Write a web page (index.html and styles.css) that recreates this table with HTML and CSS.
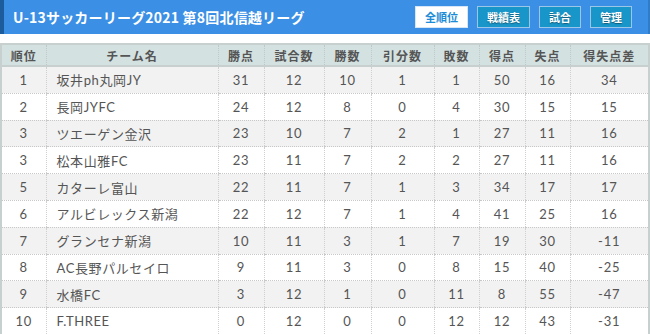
FILE: index.html
```html
<!DOCTYPE html>
<html lang="ja">
<head>
<meta charset="utf-8">
<link rel="stylesheet" href="styles.css">
</head>
<body>
<header class="bar">
  <h1 class="title">U-13サッカーリーグ2021 第8回北信越リーグ</h1>
  <nav class="nav">
    <a class="btn btn-active">全順位</a>
    <a class="btn">戦績表</a>
    <a class="btn">試合</a>
    <a class="btn">管理</a>
  </nav>
</header>
<table class="standings">
  <colgroup>
    <col style="width:45px"><col style="width:172px"><col style="width:46px"><col style="width:60px"><col style="width:47px"><col style="width:63px"><col style="width:45px"><col style="width:46px"><col style="width:45px"><col>
  </colgroup>
  <thead>
    <tr><th>順位</th><th>チーム名</th><th>勝点</th><th>試合数</th><th>勝数</th><th>引分数</th><th>敗数</th><th>得点</th><th>失点</th><th>得失点差</th></tr>
  </thead>
  <tbody>
    <tr><td>1</td><td class="team">坂井ph丸岡JY</td><td>31</td><td>12</td><td>10</td><td>1</td><td>1</td><td>50</td><td>16</td><td>34</td></tr>
    <tr><td>2</td><td class="team">長岡JYFC</td><td>24</td><td>12</td><td>8</td><td>0</td><td>4</td><td>30</td><td>15</td><td>15</td></tr>
    <tr><td>3</td><td class="team">ツエーゲン金沢</td><td>23</td><td>10</td><td>7</td><td>2</td><td>1</td><td>27</td><td>11</td><td>16</td></tr>
    <tr><td>3</td><td class="team">松本山雅FC</td><td>23</td><td>11</td><td>7</td><td>2</td><td>2</td><td>27</td><td>11</td><td>16</td></tr>
    <tr><td>5</td><td class="team">カターレ富山</td><td>22</td><td>11</td><td>7</td><td>1</td><td>3</td><td>34</td><td>17</td><td>17</td></tr>
    <tr><td>6</td><td class="team">アルビレックス新潟</td><td>22</td><td>12</td><td>7</td><td>1</td><td>4</td><td>41</td><td>25</td><td>16</td></tr>
    <tr><td>7</td><td class="team">グランセナ新潟</td><td>10</td><td>11</td><td>3</td><td>1</td><td>7</td><td>19</td><td>30</td><td>-11</td></tr>
    <tr><td>8</td><td class="team">AC長野パルセイロ</td><td>9</td><td>11</td><td>3</td><td>0</td><td>8</td><td>15</td><td>40</td><td>-25</td></tr>
    <tr><td>9</td><td class="team">水橋FC</td><td>3</td><td>12</td><td>1</td><td>0</td><td>11</td><td>8</td><td>55</td><td>-47</td></tr>
    <tr><td>10</td><td class="team">F.THREE</td><td>0</td><td>12</td><td>0</td><td>0</td><td>12</td><td>12</td><td>43</td><td>-31</td></tr>
  </tbody>
</table>
</body>
</html>
```

FILE: styles.css
```css
html, body {
  margin: 0;
  padding: 0;
  background: #fff;
}
body {
  font-family: Lato, "Noto Sans CJK JP", sans-serif;
  color: #555;
  width: 650px;
}
.bar {
  display: flex;
  align-items: center;
  justify-content: space-between;
  height: 34px;
  box-sizing: border-box;
  background: #3b8fe5;
  border-left: 4px solid #1c5b9c;
  border-right: 2px solid #2f7cc9;
  padding: 0 16px 0 9px;
}
.title {
  margin: 0;
  font-family: "Noto Sans CJK JP", sans-serif;
  font-size: 14px;
  font-weight: 700;
  color: #fff;
  letter-spacing: 0.2px;
}
.nav {
  display: flex;
  gap: 9px;
}
.btn {
  display: block;
  box-sizing: border-box;
  height: 22px;
  line-height: 20px;
  padding: 0 9px;
  font-family: "Noto Sans CJK JP", sans-serif;
  font-size: 11px;
  font-weight: 700;
  color: #fff;
  background: #1896c9;
  border: 1px solid #9cc6e8;
  text-shadow: 0 1px 1px rgba(0,0,0,0.4);
}
.btn-active {
  background: #fff;
  color: #1c8cd6;
  border-color: #d7e6f5;
  text-shadow: none;
}
.standings {
  margin-top: 9px;
  width: 650px;
  border-collapse: collapse;
  table-layout: fixed;
  border-left: 2px solid #c8cfcf;
  border-right: 2px solid #c8cfcf;
  font-size: 13px;
}
.standings th {
  height: 20px;
  background: #d4e1e1;
  color: #555;
  font-family: "Noto Sans CJK JP", sans-serif;
  font-weight: 700;
  font-size: 12px;
  letter-spacing: 1px;
  border-top: 2px solid #c8cfcf;
  border-bottom: 2px solid #c8cfcf;
  border-left: 1px dotted #bfc9c9;
  padding: 0;
}
.standings td {
  height: 25.8px;
  padding: 0;
  text-align: center;
  border-bottom: 1px dotted #c8c8c8;
  border-left: 1px dotted #cfcfcf;
  letter-spacing: 0.8px;
}
.standings td.team {
  text-align: left;
  padding-left: 10px;
  letter-spacing: 0.6px;
}
.standings tbody tr:nth-child(odd) {
  background: #f2f2f2;
}
```
